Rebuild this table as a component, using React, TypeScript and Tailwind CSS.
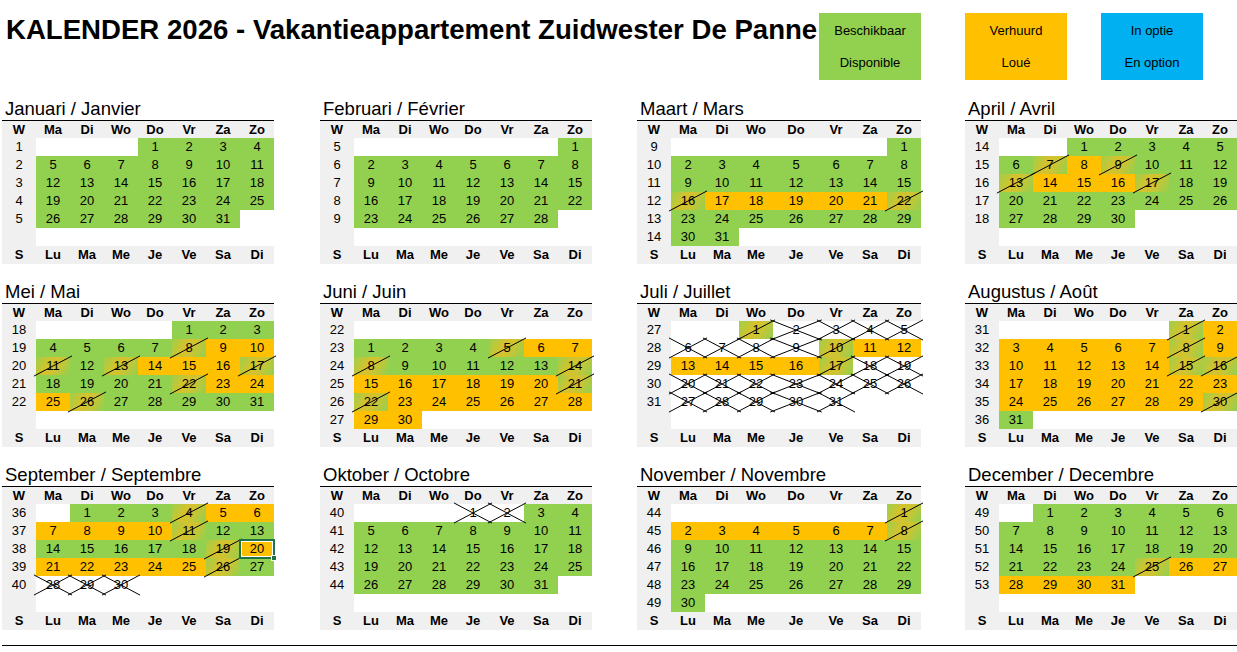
import React from 'react';

type S = 'g' | 'o' | 'd' | 'x';

type Month = {
  name: string;
  weeks: (number | null)[];
  start: number;
  off: number;
  st: string;
};

const r = (c: string, n: number) => c.repeat(n);

const MONTHS: Month[] = [
  { name: 'Januari / Janvier', weeks: [1, 2, 3, 4, 5, null], start: 0, off: 3, st: r('g', 31) },
  { name: 'Februari / Février', weeks: [5, 6, 7, 8, 9, null], start: 0, off: 6, st: r('g', 28) },
  { name: 'Maart / Mars', weeks: [9, 10, 11, 12, 13, 14], start: 0, off: 6, st: r('g', 15) + 'd' + r('o', 5) + 'd' + r('g', 9) },
  { name: 'April / Avril', weeks: [14, 15, 16, 17, 18, null], start: 0, off: 2, st: r('g', 6) + 'dod' + r('g', 3) + 'd' + r('o', 3) + 'd' + r('g', 13) },
  { name: 'Mei / Mai', weeks: [18, 19, 20, 21, 22, null], start: 0, off: 4, st: r('g', 7) + 'd' + r('o', 2) + 'dgd' + r('o', 3) + 'd' + r('g', 4) + 'd' + r('o', 3) + 'd' + r('g', 5) },
  { name: 'Juni / Juin', weeks: [22, 23, 24, 25, 26, 27], start: 1, off: 0, st: r('g', 4) + 'd' + r('o', 2) + 'd' + r('g', 5) + 'd' + r('o', 6) + 'dd' + r('o', 8) },
  { name: 'Juli / Juillet', weeks: [27, 28, 29, 30, 31, null], start: 0, off: 2, st: 'd' + r('x', 8) + 'd' + r('o', 6) + 'd' + r('x', 14) },
  { name: 'Augustus / Août', weeks: [31, 32, 33, 34, 35, 36], start: 0, off: 5, st: 'd' + r('o', 6) + 'd' + r('o', 6) + 'dd' + r('o', 13) + 'dg' },
  { name: 'September / Septembre', weeks: [36, 37, 38, 39, 40, null], start: 0, off: 1, st: r('g', 3) + 'd' + r('o', 6) + 'd' + r('g', 7) + 'd' + r('o', 6) + 'dg' + r('x', 3) },
  { name: 'Oktober / Octobre', weeks: [40, 41, 42, 43, 44, null], start: 0, off: 3, st: 'xx' + r('g', 29) },
  { name: 'November / Novembre', weeks: [44, 45, 46, 47, 48, 49], start: 0, off: 6, st: 'd' + r('o', 6) + 'd' + r('g', 22) },
  { name: 'December / Decembre', weeks: [49, 50, 51, 52, 53, null], start: 0, off: 1, st: r('g', 24) + 'd' + r('o', 6) },
];

const TOP = ['W', 'Ma', 'Di', 'Wo', 'Do', 'Vr', 'Za', 'Zo'];
const BOTTOM = ['S', 'Lu', 'Ma', 'Me', 'Je', 'Ve', 'Sa', 'Di'];

function DayCell({ n, s, sel }: { n: number; s: S; sel: boolean }) {
  const bg =
    s === 'g'
      ? 'bg-[#92d050]'
      : s === 'o'
      ? 'bg-[#ffc000]'
      : s === 'd'
      ? 'bg-[linear-gradient(120deg,#9fcf4a_0%,#d6c22c_40%,#cdc432_60%,#92d050_100%)]'
      : 'bg-white';
  return (
    <div className={`relative flex h-[18px] items-center justify-center ${bg}`}>
      <span className="relative">{n}</span>
      {s === 'd' && (
        <svg className="pointer-events-none absolute inset-0 z-10 h-full w-full overflow-visible">
          <line x1="-6%" y1="106%" x2="106%" y2="-6%" stroke="#000" strokeWidth="1" />
        </svg>
      )}
      {s === 'x' && (
        <svg className="pointer-events-none absolute inset-0 z-10 h-full w-full overflow-visible">
          <line x1="-6%" y1="106%" x2="106%" y2="-6%" stroke="#000" strokeWidth="1" />
          <line x1="-6%" y1="-6%" x2="106%" y2="106%" stroke="#000" strokeWidth="1" />
        </svg>
      )}
      {sel && (
        <div className="pointer-events-none absolute -inset-[1px] z-20 border-2 border-[#217346]">
          <div className="absolute inset-0 border border-white" />
          <div className="absolute -bottom-[4px] -right-[4px] h-[6px] w-[6px] border border-white bg-[#217346]" />
        </div>
      )}
    </div>
  );
}

function Block({ m, wide, idx }: { m: Month; wide: boolean; idx: number }) {
  const cols = wide
    ? 'grid-cols-[34px_34px_34px_34px_46px_34px_34px_34px]'
    : 'grid-cols-[34px_34px_34px_34px_34px_34px_34px_34px]';
  const width = wide ? 'w-[284px]' : 'w-[272px]';
  const grid: ({ n: number; s: S } | null)[][] = Array.from({ length: 6 }, () => Array(7).fill(null));
  let row = m.start;
  let col = m.off;
  for (let n = 1; n <= m.st.length; n++) {
    grid[row][col] = { n, s: m.st[n - 1] as S };
    col++;
    if (col === 7) {
      col = 0;
      row++;
    }
  }
  return (
    <div className={`${width} shrink-0`}>
      <div className="h-[20px] whitespace-nowrap pl-[3px] text-[18.5px] leading-[18px] text-black">{m.name}</div>
      <div className="h-px bg-black" />
      <div className={`grid ${cols} text-[13px] text-black`}>
        {TOP.map((t, i) => (
          <div key={'t' + i} className="flex h-[17px] items-center justify-center bg-[#f0f0f0] font-bold">
            {t}
          </div>
        ))}
        {grid.map((rw, ri) => (
          <React.Fragment key={'r' + ri}>
            <div className="flex h-[18px] items-center justify-center bg-[#f0f0f0]">{m.weeks[ri] ?? ''}</div>
            {rw.map((c, ci) =>
              c ? (
                <DayCell key={ci} n={c.n} s={c.s} sel={idx === 8 && c.n === 20} />
              ) : (
                <div key={ci} className="h-[18px] bg-white" />
              )
            )}
          </React.Fragment>
        ))}
        {BOTTOM.map((t, i) => (
          <div key={'b' + i} className="flex h-[18px] items-center justify-center bg-[#f0f0f0] font-bold">
            {t}
          </div>
        ))}
      </div>
    </div>
  );
}

function Legend({ color, a, b }: { color: string; a: string; b: string }) {
  return (
    <div className={`mt-[13px] grid h-[67px] w-[102px] shrink-0 grid-rows-2 text-center text-[13px] text-black ${color}`}>
      <div className="flex items-center justify-center pt-[1px]">{a}</div>
      <div className="flex items-center justify-center pb-[1px]">{b}</div>
    </div>
  );
}

export default function App() {
  const rows = [MONTHS.slice(0, 4), MONTHS.slice(4, 8), MONTHS.slice(8, 12)];
  return (
    <div className="h-[652px] w-[1237px] overflow-hidden bg-white font-['Liberation_Sans',Arial,sans-serif] text-black">
      <div className="flex h-[100px]">
        <div className="mt-[13px] w-[819px] shrink-0 whitespace-nowrap pl-[6px] text-[27.6px] font-bold leading-[33px]">
          KALENDER 2026 - Vakantieappartement Zuidwester De Panne
        </div>
        <Legend color="bg-[#92d050]" a="Beschikbaar" b="Disponible" />
        <div className="w-[44px] shrink-0" />
        <Legend color="bg-[#ffc000]" a="Verhuurd" b="Loué" />
        <div className="w-[34px] shrink-0" />
        <Legend color="bg-[#00b0f0]" a="In optie" b="En option" />
      </div>
      <div className="flex flex-col gap-[19px] pl-[2px]">
        {rows.map((rw, ri) => (
          <div key={ri} className="flex">
            <Block m={rw[0]} wide={false} idx={ri * 4} />
            <div className="w-[46px] shrink-0" />
            <Block m={rw[1]} wide={false} idx={ri * 4 + 1} />
            <div className="w-[45px] shrink-0" />
            <Block m={rw[2]} wide={true} idx={ri * 4 + 2} />
            <div className="w-[44px] shrink-0" />
            <Block m={rw[3]} wide={false} idx={ri * 4 + 3} />
          </div>
        ))}
      </div>
      <div className="ml-[2px] mt-[15px] h-px bg-black" />
    </div>
  );
}
